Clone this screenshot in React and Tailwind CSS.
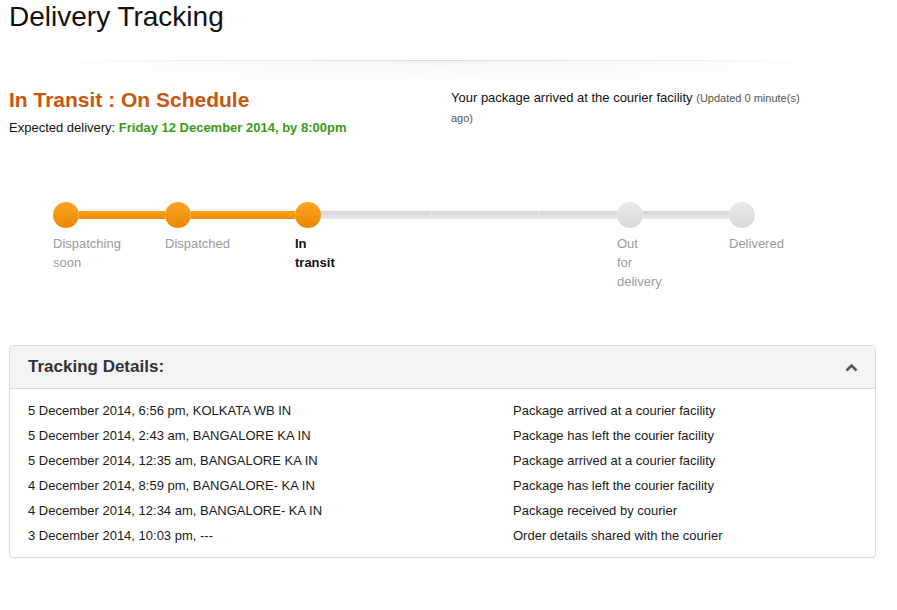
import React from 'react';

const steps = [
  { label: 'Dispatching soon', done: true, w: 'w-[112px]' },
  { label: 'Dispatched', done: true, w: 'w-[130px]' },
  { label: 'In transit', done: true, current: true, w: 'w-[322px]', breaks: true },
  { label: 'Out for delivery', done: false, w: 'w-[112px]' },
  { label: 'Delivered', done: false, w: 'w-[26px]' },
];

const events = [
  ['5 December 2014, 6:56 pm, KOLKATA WB IN', 'Package arrived at a courier facility'],
  ['5 December 2014, 2:43 am, BANGALORE KA IN', 'Package has left the courier facility'],
  ['5 December 2014, 12:35 am, BANGALORE KA IN', 'Package arrived at a courier facility'],
  ['4 December 2014, 8:59 pm, BANGALORE- KA IN', 'Package has left the courier facility'],
  ['4 December 2014, 12:34 am, BANGALORE- KA IN', 'Package received by courier'],
  ['3 December 2014, 10:03 pm, ---', 'Order details shared with the courier'],
];

const orangeLine = 'h-2 bg-gradient-to-b from-[#f9a21b] to-[#f08c03]';
const greyLine = 'h-2 bg-gradient-to-b from-[#d5d5d5] to-[#e9e9e9]';

const Step = ({ step, next }) => (
  <div className={`${step.w} shrink-0`}>
    <div className="flex items-center h-[26px]">
      <div className={`w-[26px] h-[26px] rounded-full shrink-0 bg-gradient-to-b ${step.done ? 'from-[#fba720] to-[#eb8700]' : 'from-[#e9e9e9] to-[#d9d9d9]'}`} />
      {next && (
        step.breaks ? (
          <div className="flex-1 flex">
            <div className={`w-[109px] ${greyLine}`} />
            <div className={`w-[108px] border-l border-[#ececec] ${greyLine}`} />
            <div className={`flex-1 border-l border-[#ececec] ${greyLine}`} />
          </div>
        ) : (
          <div className={`flex-1 ${next.done ? orangeLine : greyLine}`} />
        )
      )}
    </div>
    <div className={`mt-[6px] w-[30px] text-[13px] leading-[19px] ${step.current ? 'font-bold text-[#111]' : 'text-[#9b9b9b]'}`}>
      {step.label}
    </div>
  </div>
);

const App = () => {
  return (
    <div className="min-h-screen bg-white font-['Liberation_Sans',Arial,Helvetica,sans-serif] text-[#111] pl-[9px] pt-px">
      <h1 className="text-[28px] leading-[32px] font-normal text-[#111]">Delivery Tracking</h1>

      <div className="mt-[27px] w-[860px]">
        <div className="h-px bg-gradient-to-r from-transparent via-[#dcdcdc] to-transparent" />
        <div className="h-[27px] bg-[radial-gradient(ellipse_at_top,#f6f6f6,#ffffff_70%)]" />
      </div>

      <div className="flex items-start">
        <div className="w-[442px] shrink-0">
          <h2 className="text-[21px] leading-[24px] font-bold text-[#c9560e]">In Transit : On Schedule</h2>
          <p className="mt-[6px] text-[13px] leading-[20px] text-[#111]">
            Expected delivery: <span className="font-bold text-[#3a9a16]">Friday 12 December 2014, by 8:00pm</span>
          </p>
        </div>
        <p className="w-[360px] text-[13px] leading-[20px] text-[#111]">
          Your package arrived at the courier facility <span className="text-[11px] text-[#555]">(Updated 0 minute(s) ago)</span>
        </p>
      </div>

      <div className="mt-[64px] pl-[44px] flex">
        {steps.map((s, i) => (
          <Step key={i} step={s} next={steps[i + 1]} />
        ))}
      </div>

      <div className="mt-[54px] w-[867px] border border-[#dcdcdc] rounded-[4px] shadow-[0_1px_1px_rgba(0,0,0,0.04)] overflow-hidden">
        <div className="h-[43px] bg-[#f4f4f4] border-b border-[#dcdcdc] flex items-center justify-between pl-[18px] pr-[17px]">
          <span className="text-[17px] font-bold text-[#333]">Tracking Details:</span>
          <svg width="13" height="9" viewBox="0 0 13 9" fill="none">
            <polyline points="1.5,7.5 6.5,2.5 11.5,7.5" stroke="#555" strokeWidth="2.6" />
          </svg>
        </div>
        <div className="pt-[9px] pb-[9px] pl-[18px]">
          {events.map((e, i) => (
            <div key={i} className="flex text-[13px] leading-[25px] text-[#1a1a1a]">
              <div className="w-[485px] shrink-0">{e[0]}</div>
              <div>{e[1]}</div>
            </div>
          ))}
        </div>
      </div>
    </div>
  );
};

export default App;
